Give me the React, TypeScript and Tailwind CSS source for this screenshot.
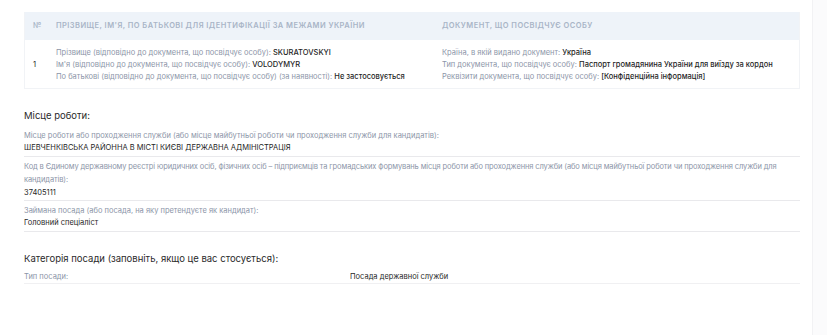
import React from "react";

const label = "text-[7.5px] leading-[11px] text-[#8c95a8]";
const value = "text-[7.5px] leading-[11px] text-[#1f1f1f]";

type Line = { k: string; v: string };

const Lines = ({ items }: { items: Line[] }) => (
  <div className="flex flex-col">
    {items.map((it) => (
      <p key={it.k} className="text-[7.5px] leading-[12px] text-[#8c95a8]">
        {it.k}: <span className="text-[#1f1f1f] font-medium">{it.v}</span>
      </p>
    ))}
  </div>
);

const Field = ({ k, v }: { k: string; v: string }) => (
  <div className="border-b border-[#e9e9ec] pt-[4px] pb-[3px]">
    <p className={label}>{k}:</p>
    <p className={`${value} mt-[1px]`}>{v}</p>
  </div>
);

export default function App() {
  return (
    <div
      className="w-[827px] h-[335px] bg-white flex overflow-hidden"
      style={{ fontFamily: "Inter, 'Noto Sans', sans-serif" }}
    >
      <div className="w-[812px] pl-6 pr-3 pt-3">
        {/* таблиця */}
        <div className="border border-[#f1f3f6] border-t-0">
          <div className="grid grid-cols-[31px_386px_1fr] h-[28px] items-center bg-[#eef3f9] text-[7.5px] font-semibold uppercase tracking-[0.06em] text-[#a9b5c7]">
            <div className="pl-2">№</div>
            <div>Прізвище, ім'я, по батькові для ідентифікації за межами України</div>
            <div>Документ, що посвідчує особу</div>
          </div>
          <div className="grid grid-cols-[31px_386px_1fr] h-[48px] pt-[7px]">
            <div className="pl-2 text-[7.5px] text-[#1f1f1f] self-center -mt-[5px]">1</div>
            <Lines
              items={[
                { k: "Прізвище (відповідно до документа, що посвідчує особу)", v: "SKURATOVSKYI" },
                { k: "Ім'я (відповідно до документа, що посвідчує особу)", v: "VOLODYMYR" },
                { k: "По батькові (відповідно до документа, що посвідчує особу) (за наявності)", v: "Не застосовується" },
              ]}
            />
            <Lines
              items={[
                { k: "Країна, в якій видано документ", v: "Україна" },
                { k: "Тип документа, що посвідчує особу", v: "Паспорт громадянина України для виїзду за кордон" },
                { k: "Реквізити документа, що посвідчує особу", v: "[Конфіденційна інформація]" },
              ]}
            />
          </div>
        </div>

        {/* місце роботи */}
        <h3 className="mt-[20px] text-[9.5px] leading-[14px] text-[#2a2a2a]">Місце роботи:</h3>
        <div className="mt-[3px]">
          <Field
            k="Місце роботи або проходження служби (або місце майбутньої роботи чи проходження служби для кандидатів)"
            v="ШЕВЧЕНКІВСЬКА РАЙОННА В МІСТІ КИЄВІ ДЕРЖАВНА АДМІНІСТРАЦІЯ"
          />
          <div className="border-b border-[#e9e9ec] pt-[3px] pb-[2px]">
            <p className="text-[7.5px] leading-[13px] text-[#8c95a8] tracking-[-0.015em]">
              Код в Єдиному державному реєстрі юридичних осіб, фізичних осіб – підприємців та громадських формувань місця
              роботи або проходження служби (або місця майбутньої роботи чи проходження служби для кандидатів):
            </p>
            <p className={`${value} mt-[1px]`}>37405111</p>
          </div>
          <Field k="Займана посада (або посада, на яку претендуєте як кандидат)" v="Головний спеціаліст" />
        </div>

        {/* категорія */}
        <h3 className="mt-[20px] text-[9.5px] leading-[14px] text-[#2a2a2a]">
          Категорія посади (заповніть, якщо це вас стосується):
        </h3>
        <div className="mt-[5px] grid grid-cols-[326px_1fr] border-b border-[#f0f0f2] pb-[1px]">
          <p className={label}>Тип посади:</p>
          <p className={value}>Посада державної служби</p>
        </div>
      </div>
      <div className="flex-1 bg-[#fbfbfc] border-l border-[#f2f2f4]" />
    </div>
  );
}
